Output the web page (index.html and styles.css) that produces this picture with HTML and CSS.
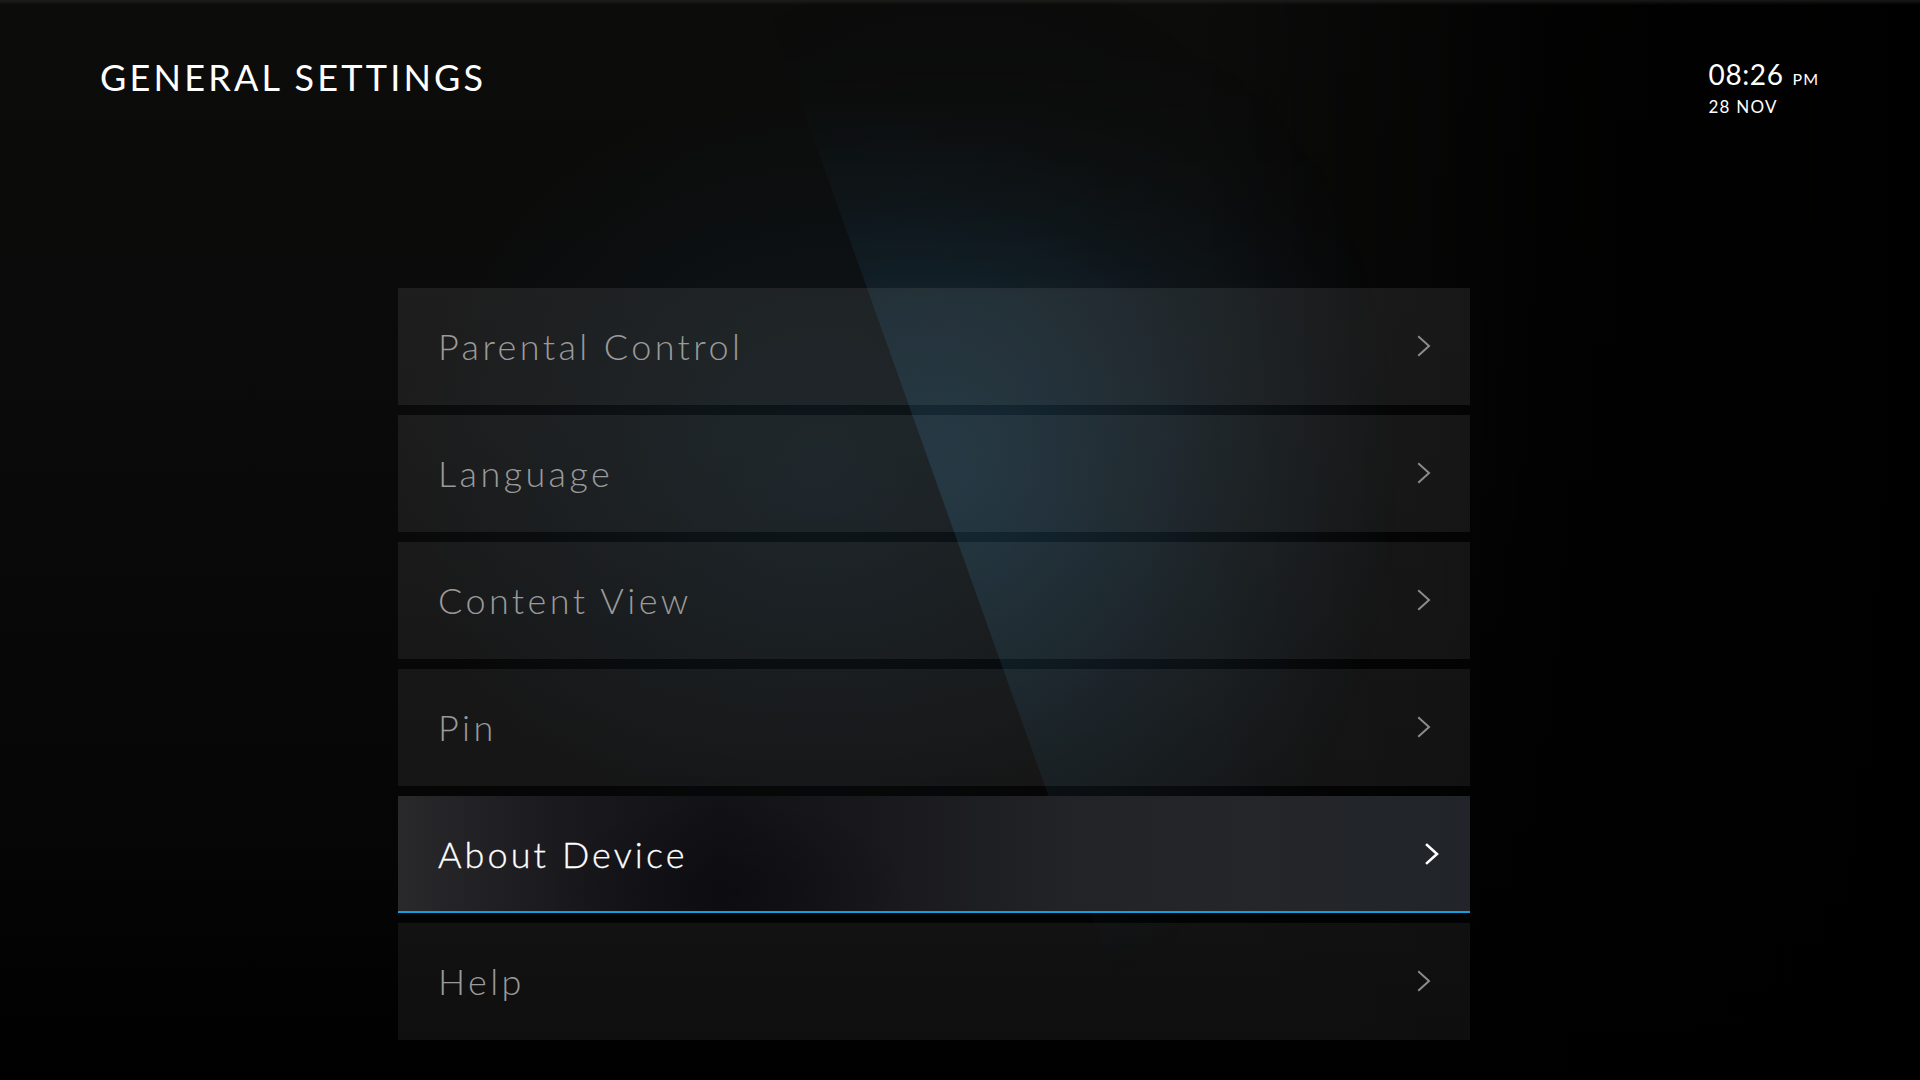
FILE: index.html
```html
<!DOCTYPE html>
<html lang="en">
<head>
<meta charset="utf-8">
<title>General Settings</title>
<link rel="stylesheet" href="styles.css">
</head>
<body>
<div class="screen">
  <div class="beam"></div>
  <header class="header">
    <h1 class="title">GENERAL SETTINGS</h1>
    <div class="clock">
      <div class="time">08:26<span class="ampm">PM</span></div>
      <div class="date">28 NOV</div>
    </div>
  </header>
  <main class="menu">
    <div class="item"><span class="label">Parental Control</span><svg class="chev" viewBox="0 0 14 22"><polyline points="2,2 12,11 2,20"/></svg></div>
    <div class="item"><span class="label">Language</span><svg class="chev" viewBox="0 0 14 22"><polyline points="2,2 12,11 2,20"/></svg></div>
    <div class="item"><span class="label">Content View</span><svg class="chev" viewBox="0 0 14 22"><polyline points="2,2 12,11 2,20"/></svg></div>
    <div class="item"><span class="label">Pin</span><svg class="chev" viewBox="0 0 14 22"><polyline points="2,2 12,11 2,20"/></svg></div>
    <div class="item item-focused"><span class="label">About Device</span><svg class="chev" viewBox="0 0 14 22"><polyline points="2,2 12,11 2,20"/></svg></div>
    <div class="item"><span class="label">Help</span><svg class="chev" viewBox="0 0 14 22"><polyline points="2,2 12,11 2,20"/></svg></div>
  </main>
</div>
</body>
</html>
```
FILE: styles.css
```css
* { box-sizing: border-box; }
html, body { margin: 0; padding: 0; }
body {
  width: 1920px;
  height: 1080px;
  overflow: hidden;
  background: #000;
  font-family: Lato, "Noto Sans", sans-serif;
  color: #fff;
}
.screen {
  position: relative;
  width: 1920px;
  height: 1080px;
  overflow: hidden;
  background:
    linear-gradient(180deg, rgba(40,40,40,0.6) 0px, rgba(20,20,20,0) 5px),
    radial-gradient(ellipse 420px 380px at 820px 470px, rgba(25,60,80,0.26), rgba(0,0,0,0) 100%),
    linear-gradient(90deg, rgba(0,0,0,0) 0%, rgba(0,0,0,0) 62%, rgba(0,0,0,0.85) 82%, #000 100%),
    linear-gradient(180deg, #0c0c0b 0%, #0a0a0a 40%, #050505 80%, #000 100%);
}
.beam {
  position: absolute;
  inset: 0;
  clip-path: polygon(764px 0px, 1920px 0px, 1920px 1080px, 1150px 1080px);
  background:
    radial-gradient(ellipse 440px 540px at 960px 470px, rgba(45,105,140,0.28), rgba(0,0,0,0) 100%);
  -webkit-mask-image: linear-gradient(180deg, rgba(0,0,0,0.12) 60px, #000 300px);
  mask-image: linear-gradient(180deg, rgba(0,0,0,0.12) 60px, #000 300px);
  pointer-events: none;
}
.header {
  position: relative;
  display: flex;
  justify-content: space-between;
  align-items: flex-start;
  padding: 55px 101px 0 100px;
  height: 288px;
}
.title {
  margin: 0;
  font-size: 36px;
  font-weight: 400;
  letter-spacing: 3.2px;
  line-height: 44px;
}
.clock {
  padding-top: 3px;
  letter-spacing: 0.6px;
}
.time {
  font-size: 28px;
  line-height: 33px;
  font-weight: 400;
}
.ampm {
  font-size: 16px;
  margin-left: 9px;
  letter-spacing: 1px;
}
.date {
  font-size: 17px;
  line-height: 22px;
  letter-spacing: 1.2px;
  margin-top: 1px;
}
.menu {
  position: relative;
  display: flex;
  flex-direction: column;
  gap: 10px;
  width: 1072px;
  margin-left: 398px;
}
.item {
  display: flex;
  align-items: center;
  justify-content: space-between;
  height: 117px;
  padding: 0 39px 2px 40px;
  background: linear-gradient(180deg, rgba(255,255,255,0.08) 250px, rgba(255,255,255,0.055) 1040px);
  background-attachment: fixed;
}
.label {
  font-size: 36px;
  font-weight: 300;
  letter-spacing: 3.4px;
  color: #9a9a9a;
}
.chev {
  width: 14px;
  height: 22px;
  fill: none;
  stroke: #8c8c8c;
  stroke-width: 2;
  stroke-linecap: square;
}
.item-focused {
  border-bottom: 2px solid #119fdf;
  padding-right: 31px;
  padding-bottom: 0;
  background:
    radial-gradient(ellipse 180px 90px at 330px 95px, rgba(8,8,12,0.55), rgba(0,0,0,0) 100%),
    linear-gradient(90deg, #29292c 0%, #1a1a1e 15%, #121216 30%, #19191d 45%, #222327 62%, #242629 80%, #21252b 100%);
}
.item-focused .label {
  color: #fff;
  font-weight: 300;
  letter-spacing: 3.1px;
  -webkit-text-stroke: 0.3px #fff;
}
.item-focused .chev {
  stroke: #fff;
  stroke-width: 2.6;
  height: 24px;
}
```
